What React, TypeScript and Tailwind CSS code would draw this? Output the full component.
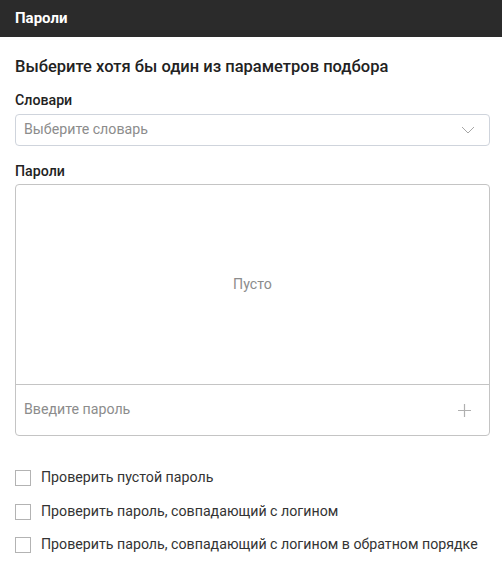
import { useState } from 'react';

const font = { fontFamily: 'Roboto, "Noto Sans", sans-serif' };

// Square checkbox with label
function Option({ label }: { label: string }) {
  const [checked, setChecked] = useState(false);
  return (
    <label className="flex items-center h-[20px] cursor-pointer select-none">
      <span
        onClick={() => setChecked(!checked)}
        className="w-[16px] h-[16px] border border-[#b3b3b3] bg-white shrink-0"
      />
      <span className="ml-[10px] text-[14.2px] text-[#333]">{label}</span>
    </label>
  );
}

export default function App() {
  const [value, setValue] = useState('');

  return (
    <div className="w-[502px] h-[577px] bg-white" style={font}>
      {/* Title bar */}
      <header className="h-[37px] bg-[#2b2b2b] flex items-center px-[15px]">
        <h1 className="text-white text-[15px] font-bold">Пароли</h1>
      </header>

      <main className="pl-[15px] pr-[12px]">
        <h2 className="mt-[20px] h-[20px] leading-[20px] text-[16.5px] font-medium text-[#222]">
          Выберите хотя бы один из параметров подбора
        </h2>

        {/* Dictionary select */}
        <div className="mt-[14px] h-[18px] leading-[18px] text-[14.2px] font-medium text-[#222]">
          Словари
        </div>
        <button
          type="button"
          className="mt-[5px] w-full h-[32px] border border-[#cfd4dc] rounded-[4px] flex items-center justify-between pl-[8px] pr-[14px] text-left"
        >
          <span className="text-[14.2px] text-[#8c8c8c]">Выберите словарь</span>
          <svg width="14" height="8" viewBox="0 0 14 8" fill="none">
            <path d="M1 1l6 6 6-6" stroke="#a6a6a6" strokeWidth="1" />
          </svg>
        </button>

        {/* Password list */}
        <div className="mt-[16px] h-[18px] leading-[18px] text-[14.2px] font-medium text-[#222]">
          Пароли
        </div>
        <div className="mt-[4px] w-full h-[252px] border border-[#c4c4c4] rounded-[4px] flex flex-col">
          <div className="flex-1 flex items-center justify-center text-[14.2px] text-[#8c8c8c]">
            Пусто
          </div>
          <div className="h-[51px] border-t border-[#c4c4c4] flex items-center pl-[8px] pr-[18px]">
            <input
              value={value}
              onChange={(e) => setValue(e.target.value)}
              placeholder="Введите пароль"
              className="flex-1 outline-none text-[14.2px] text-[#333] placeholder:text-[#8c8c8c] bg-transparent"
            />
            <svg width="13" height="13" viewBox="0 0 13 13" fill="none">
              <path d="M6.5 0v13M0 6.5h13" stroke="#b0b0b0" strokeWidth="1.2" />
            </svg>
          </div>
        </div>

        {/* Extra checks */}
        <div className="mt-[32px] flex flex-col gap-[13.5px]">
          <Option label="Проверить пустой пароль" />
          <Option label="Проверить пароль, совпадающий с логином" />
          <Option label="Проверить пароль, совпадающий с логином в обратном порядке" />
        </div>
      </main>
    </div>
  );
}
